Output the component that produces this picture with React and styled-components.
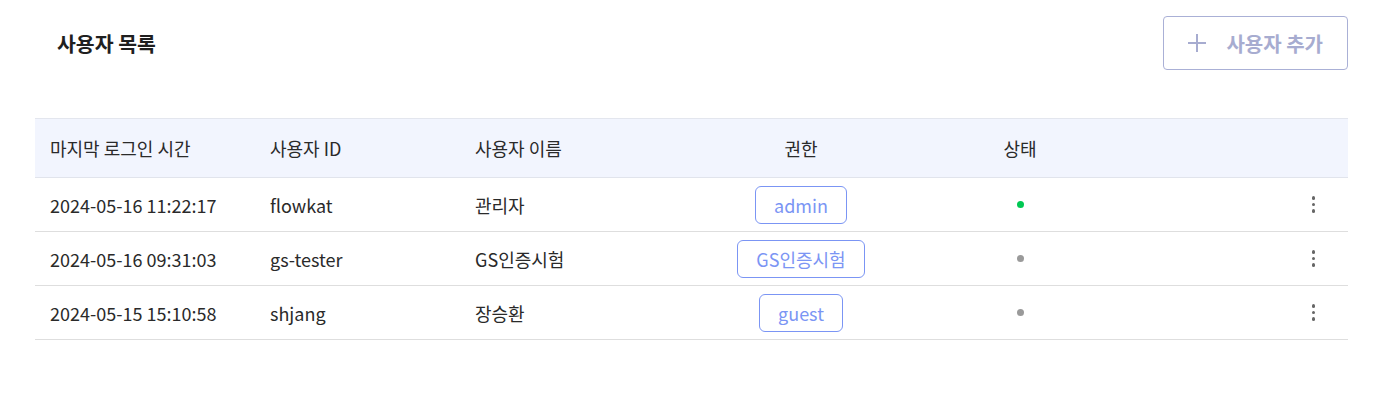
import styled, { createGlobalStyle } from "styled-components";

const GlobalStyle = createGlobalStyle`
  body {
    margin: 0;
    background: #ffffff;
    font-family: "Noto Sans CJK KR", "Noto Sans", sans-serif;
    color: #222;
  }
`;

const Page = styled.div`
  padding: 16px 39px 0 35px;
`;

const TopBar = styled.div`
  display: flex;
  align-items: center;
  justify-content: space-between;
  height: 54px;
`;

const Title = styled.h2`
  margin: 0 0 0 22px;
  font-size: 20.5px;
  font-weight: 700;
  color: #1f1f1f;
`;

const AddButton = styled.button`
  display: flex;
  align-items: center;
  gap: 20px;
  height: 54px;
  padding: 0 24px 0 24px;
  background: #fff;
  border: 1px solid #aab0d6;
  border-radius: 4px;
  color: #a7acd0;
  font-family: inherit;
  font-size: 20px;
  font-weight: 700;
  cursor: pointer;
`;

const Table = styled.div`
  margin-top: 48px;
  border-top: 1px solid #e3e6ee;
`;

const Row = styled.div`
  display: grid;
  grid-template-columns: 220px 205px 220px 242px 196px 1fr;
  align-items: center;
  height: ${(p) => (p.$head ? "58px" : "53px")};
  background: ${(p) => (p.$head ? "#f2f5fe" : "#fff")};
  border-bottom: 1px solid ${(p) => (p.$head ? "#e1e4ec" : "#dedede")};
  font-size: 18px;
  color: #2a2a2a;
`;

const Cell = styled.div`
  padding-left: ${(p) => (p.$center ? "0" : "15px")};
  display: flex;
  justify-content: ${(p) => (p.$center ? "center" : p.$end ? "flex-end" : "flex-start")};
  padding-right: ${(p) => (p.$end ? "31px" : "0")};
`;

const Badge = styled.span`
  display: inline-flex;
  align-items: center;
  height: 36px;
  padding: 0 18px;
  border: 1px solid #7b95f4;
  border-radius: 6px;
  color: #7b95f4;
  font-size: 18px;
`;

const Dot = styled.span`
  width: 7px;
  height: 7px;
  border-radius: 50%;
  background: ${(p) => (p.$active ? "#00c853" : "#9a9a9a")};
`;

const Kebab = styled.button`
  display: flex;
  flex-direction: column;
  gap: 3px;
  padding: 2px;
  background: none;
  border: none;
  cursor: pointer;

  span {
    width: 3.5px;
    height: 3.5px;
    border-radius: 50%;
    background: #666;
  }
`;

const users = [
  { time: "2024-05-16 11:22:17", id: "flowkat", name: "관리자", role: "admin", active: true },
  { time: "2024-05-16 09:31:03", id: "gs-tester", name: "GS인증시험", role: "GS인증시험", active: false },
  { time: "2024-05-15 15:10:58", id: "shjang", name: "장승환", role: "guest", active: false },
];

const PlusIcon = () => (
  <svg width="18" height="18" viewBox="0 0 18 18" fill="none">
    <path d="M9 0v18M0 9h18" stroke="#a7acd0" strokeWidth="2" />
  </svg>
);

export default function App() {
  return (
    <>
      <GlobalStyle />
      <Page>
        <TopBar>
          <Title>사용자 목록</Title>
          <AddButton>
            <PlusIcon />
            사용자 추가
          </AddButton>
        </TopBar>
        <Table>
          <Row $head>
            <Cell>마지막 로그인 시간</Cell>
            <Cell>사용자 ID</Cell>
            <Cell>사용자 이름</Cell>
            <Cell $center>권한</Cell>
            <Cell $center>상태</Cell>
            <Cell />
          </Row>
          {users.map((u) => (
            <Row key={u.id}>
              <Cell>{u.time}</Cell>
              <Cell>{u.id}</Cell>
              <Cell>{u.name}</Cell>
              <Cell $center>
                <Badge>{u.role}</Badge>
              </Cell>
              <Cell $center>
                <Dot $active={u.active} />
              </Cell>
              <Cell $end>
                <Kebab aria-label="더보기">
                  <span />
                  <span />
                  <span />
                </Kebab>
              </Cell>
            </Row>
          ))}
        </Table>
      </Page>
    </>
  );
}
